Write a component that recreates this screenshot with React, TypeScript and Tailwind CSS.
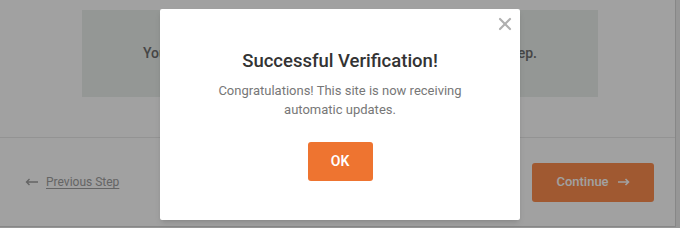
import { X } from "lucide-react";

export default function App() {
  return (
    <div className="relative w-[680px] h-[228px] overflow-hidden bg-[#eeeeee] font-['Roboto',sans-serif]">
      {/* page behind the modal */}
      <div className="w-[676px] h-[227px] bg-white border-r border-b border-[#d6d6d6] flex flex-col">
        <div className="h-[137px] pt-[10px] pl-[82px]">
          <div className="w-[516px] h-[87px] bg-[#eaefec] flex items-center justify-center">
            <p className="text-[14px] font-medium text-[#707070]">
              You need to verify your license key to continue to the next step.
            </p>
          </div>
        </div>
        <div className="flex-1 border-t border-[#e9e9e9] flex items-center justify-between pl-[25px] pr-[21px]">
          <a className="flex items-center gap-[8px] text-[12px] text-[#a0a0a0]">
            <svg width="13" height="8" viewBox="0 0 13 8" fill="none" stroke="currentColor" strokeWidth="1.4">
              <path d="M13 4H1.5M4.5 1 1.5 4l3 3" />
            </svg>
            <span className="underline underline-offset-2">Previous Step</span>
          </a>
          <button className="w-[122px] h-[39px] rounded-[3px] bg-[#fe8e4f] text-white text-[13px] font-medium flex items-center justify-center gap-[9px]">
            Continue
            <svg width="12" height="8" viewBox="0 0 12 8" fill="none" stroke="currentColor" strokeWidth="1.6">
              <path d="M0 4h10.5M7.5 1l3 3-3 3" />
            </svg>
          </button>
        </div>
      </div>

      <div className="absolute inset-0 bg-black/[0.37]" />

      <div className="absolute inset-0 flex items-center justify-center">
        <div className="relative w-[360px] h-[211px] bg-white rounded-[2px] shadow-md flex flex-col items-center pt-[39px]">
          <button className="absolute top-[5px] right-[5px] text-[#b0b0b0]">
            <X size={20} strokeWidth={2.6} />
          </button>
          <h2 className="text-[18.5px] leading-[26px] font-medium text-[#333333]">
            Successful Verification!
          </h2>
          <p className="mt-[7px] text-[13px] leading-[19px] text-[#777777] text-center">
            Congratulations! This site is now receiving
            <br />
            automatic updates.
          </p>
          <button className="mt-[23px] w-[65px] h-[39px] rounded-[3px] bg-[#ee7430] text-white text-[14px] font-semibold">
            OK
          </button>
        </div>
      </div>
    </div>
  );
}
